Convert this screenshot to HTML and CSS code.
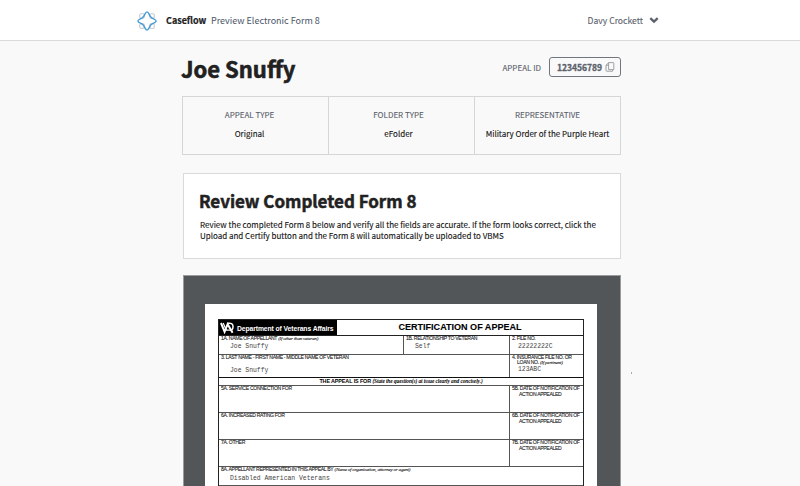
FILE: index.html
```html
<!DOCTYPE html>
<html lang="en">
<head>
<meta charset="utf-8">
<title>Caseflow</title>
<link rel="stylesheet" href="styles.css">
</head>
<body>
<header class="topbar">
  <div class="topbar-inner">
    <svg class="logo" viewBox="0 0 20 20" fill="none">
      <g stroke="#cdd0d3" stroke-width="1.2"><circle cx="5" cy="5" r="2.5"/><circle cx="15" cy="5" r="2.5"/><circle cx="5" cy="15" r="2.5"/><circle cx="15" cy="15" r="2.5"/></g>
      <path d="M10 .9C11.6 .9 12 3.4 13.2 5.2C13.8 6.1 14 6.3 14.8 6.8C16.6 8 19.1 8.4 19.1 10S16.6 12 14.8 13.2C14 13.7 13.8 13.9 13.2 14.8C12 16.6 11.6 19.1 10 19.1S8 16.6 6.8 14.8C6.2 13.9 6 13.7 5.2 13.2C3.4 12 .9 11.6 .9 10S3.4 8 5.2 6.8C6 6.3 6.2 6.1 6.8 5.2C8 3.4 8.4 .9 10 .9Z" stroke="#459bd6" stroke-width="1.4"/>
    </svg>
    <span class="brand">Caseflow</span>
    <span class="crumb">Preview Electronic Form 8</span>
    <span class="user">Davy Crockett</span>
    <svg class="chevron" viewBox="0 0 10 7"><path d="M1.3 1.2L5 4.7L8.7 1.2" fill="none" stroke="#5b616b" stroke-width="2.3"/></svg>
  </div>
</header>
<main class="content">
  <div class="heading">
    <h1>Joe Snuffy</h1>
    <span class="id-label">APPEAL ID</span>
    <span class="id-badge"><b>123456789</b>
      <svg class="copy" viewBox="0 0 10 10" fill="none"><path d="M3.6 .6H8.2Q8.8 .6 8.8 1.2V7.6H3.6Z" stroke="#858a91" stroke-width=".8"/><path d="M3.4 3.2H1V8.4Q1 9.2 1.8 9.2H7.6V8M3.6 .8L1 3.2" stroke="#9a9ea4" stroke-width="1"/></svg>
    </span>
  </div>
  <div class="summary">
    <div class="fact type"><span class="fact-label">APPEAL TYPE</span><span class="fact-value">Original</span></div>
    <div class="fact folder"><span class="fact-label">FOLDER TYPE</span><span class="fact-value">eFolder</span></div>
    <div class="fact"><span class="fact-label">REPRESENTATIVE</span><span class="fact-value">Military Order of the Purple Heart</span></div>
  </div>
  <section class="review">
    <h2>Review Completed Form 8</h2>
    <p>Review the completed Form 8 below and verify all the fields are accurate. If the form looks correct, click the<br>Upload and Certify button and the Form 8 will automatically be uploaded to VBMS</p>
  </section>
  <div class="viewer">
    <div class="page">
      <div class="form">
        <div class="row title-row">
          <div class="dept">
            <svg class="va" viewBox="0 0 14 12" fill="none" stroke="#fff"><path d="M1 1L4.6 9.8L7.6 2.2L12.6 10.8" stroke-width="2"/><path d="M3.2 1L6.4 8.6M5.8 8.2H11" stroke-width="1.2"/><path d="M7.6 1.3Q12.9 .4 13.1 4.6Q13.1 7 11.6 8.2" stroke-width="1.5"/></svg>
            <span>Department of Veterans Affairs</span>
          </div>
          <div class="form-title">CERTIFICATION OF APPEAL</div>
        </div>
        <div class="row r1">
          <div class="cell"><div class="q">1A. NAME OF APPELLANT <i>(If other than veteran)</i></div><div class="a">Joe Snuffy</div></div>
          <div class="cell rel"><div class="q">1B. RELATIONSHIP TO VETERAN</div><div class="a">Self</div></div>
          <div class="cell side"><div class="q">2. FILE NO.</div><div class="a">22222222C</div></div>
        </div>
        <div class="row r2">
          <div class="cell"><div class="q">3. LAST NAME - FIRST NAME - MIDDLE NAME OF VETERAN</div><div class="a low">Joe Snuffy</div></div>
          <div class="cell side"><div class="q">4. INSURANCE FILE NO. OR</div><div class="q ins">LOAN NO. <i>(If pertinent)</i></div><div class="a">123ABC</div></div>
        </div>
        <div class="row band"><b>THE APPEAL IS FOR <i>(State the question(s) at issue clearly and concisely.)</i></b></div>
        <div class="row issue">
          <div class="cell"><div class="q">5A. SERVICE CONNECTION FOR</div></div>
          <div class="cell side"><div class="q">5B. DATE OF NOTIFICATION OF</div><div class="q act">ACTION APPEALED</div></div>
        </div>
        <div class="row issue">
          <div class="cell"><div class="q">6A. INCREASED RATING FOR</div></div>
          <div class="cell side"><div class="q">6B. DATE OF NOTIFICATION OF</div><div class="q act">ACTION APPEALED</div></div>
        </div>
        <div class="row issue">
          <div class="cell"><div class="q">7A. OTHER</div></div>
          <div class="cell side"><div class="q">7B. DATE OF NOTIFICATION OF</div><div class="q act">ACTION APPEALED</div></div>
        </div>
        <div class="row last">
          <div class="cell"><div class="q">8A. APPELLANT REPRESENTED IN THIS APPEAL BY <i>(Name of organization, attorney or agent)</i></div><div class="a">Disabled American Veterans</div></div>
        </div>
      </div>
    </div>
    <span class="speck"></span>
  </div>
</main>
</body>
</html>
```
FILE: styles.css
```css
* { box-sizing: border-box; }
body {
  margin: 0;
  height: 486px;
  overflow: hidden;
  background: #f9f9f9;
  color: #212121;
  font: 9px/12px "Noto Sans CJK SC", "Noto Sans", sans-serif;
  white-space: nowrap;
}
.topbar { height: 41px; background: #fff; border-bottom: 1px solid #d9dadb; }
.topbar-inner { display: flex; align-items: center; width: 522px; height: 41px; margin-left: 137px; }
.logo { width: 20px; height: 20px; margin-right: 9px; flex: none; }
.brand { font-weight: 700; width: 45px; -webkit-text-stroke: .2px #212121; }
.crumb { color: #4c5568; }
.user { margin: -1px 0 0 auto; color: #5b616b; font-size: 8.6px; -webkit-text-stroke: .1px #5b616b; }
.chevron { width: 10px; height: 7px; margin-left: 6px; }
.content { width: 440px; margin-left: 181px; }
.heading { display: flex; height: 55px; align-items: flex-start; }
h1 { margin: 12px auto 0 0; font-size: 22px; line-height: 30px; font-weight: 700; -webkit-text-stroke: .6px #212121; }
.id-label { margin: 21px 8px 0 0; color: #5b616b; font-size: 8px; -webkit-text-stroke: .1px #5b616b; }
.id-badge {
  display: flex; align-items: center; justify-content: space-between;
  width: 72px; height: 20px; margin-top: 16px; padding: 0 5px 0 7px;
  border: 1px solid #70767f; border-radius: 3px; color: #5b616b;
  font-size: 8.5px;
}
.id-badge b { -webkit-text-stroke: .3px #5b616b; }
.copy { width: 10px; height: 10px; }
.summary { display: grid; grid-template-columns: 145px 146px 146px; width: 439px; height: 59px; margin-left: 1px; border: 1px solid #d5d6d7; font-size: 8px; }
.fact { display: flex; flex-direction: column; align-items: center; padding-top: 12px; gap: 7px; }
.fact + .fact { border-left: 1px solid #d5d6d7; }
.type { padding-right: 12px; }
.folder { padding-right: 6px; }
.fact-label { color: #5b616b; -webkit-text-stroke: .1px #5b616b; }
.fact-value { color: #111; -webkit-text-stroke: .1px #111; }
.review { height: 86px; margin: 18px 0 0 2px; padding: 15px 0 0 15px; width: 438px; background: #fff; border: 1px solid #d9dadb; }
h2 { margin: 0; font-size: 17px; line-height: 24px; font-weight: 700; letter-spacing: -.03px; -webkit-text-stroke: .5px #212121; }
p { margin: 6px 0 0 1px; font-size: 8px; line-height: 11px; color: #111; -webkit-text-stroke: .1px #111; }
.viewer { position: relative; width: 438px; height: 211px; margin: 16px 0 0 2px; padding: 28px 0 0 21px; background: #525659; border: 1px solid #999b9d; border-bottom: 0; }
.page { width: 392px; height: 182px; padding: 15px 13px 0 13px; background: #fff; }
.form { width: 366px; border: 1px solid #222; border-bottom: 0; color: #222; font: 5.1px/6px "Liberation Sans", Arial, sans-serif; letter-spacing: -.32px; }
.row { display: flex; border-bottom: 1px solid #555; }
.cell { flex: 1; padding-left: 2px; }
.rel { flex: none; width: 106px; border-left: 1px solid #555; }
.side { flex: none; width: 74px; border-left: 1px solid #555; }
.q { line-height: 5px; -webkit-text-stroke: .1px #222; }
.q i { font-family: "Liberation Serif", serif; font-size: 5px; letter-spacing: -.2px; }
.a { padding-left: 9px; font: 6.4px/8px "Liberation Mono", monospace; letter-spacing: 0; color: #444; margin-top: 2px; }
.side .a { padding-left: 6px; }
.title-row { height: 16px; border-color: #222; }
.dept { display: flex; align-items: center; width: 118px; padding-left: 1px; gap: 3px; background: #000; color: #fff; font-size: 6.8px; font-weight: 700; letter-spacing: -.1px; }
.dept span { padding-top: 2px; }
.va { width: 14px; height: 12px; flex: none; }
.form-title { flex: 1; text-align: center; font-size: 9.05px; line-height: 14px; font-weight: 700; letter-spacing: 0; color: #000; -webkit-text-stroke: .1px #000; }
.r1 { height: 19px; }
.r2 { height: 23px; border-color: #111; }
.low { margin-top: 7px; }
.r2 .side .a { margin-top: 1px; }
.side .ins { padding-left: 5px; }
.band { height: 8px; justify-content: center; font-size: 5.4px; line-height: 7px; letter-spacing: -.1px; color: #000; }
.band i { font-family: "Liberation Serif", serif; }
.issue { height: 27px; }
.issue .q { line-height: 5.5px; }
.side .act { padding-left: 7px; }
.last { height: 19px; }
.last .a { margin-top: 3px; }
.speck { position: absolute; left: 447px; top: 96px; width: 1px; height: 2px; background: #aaa; }
```
